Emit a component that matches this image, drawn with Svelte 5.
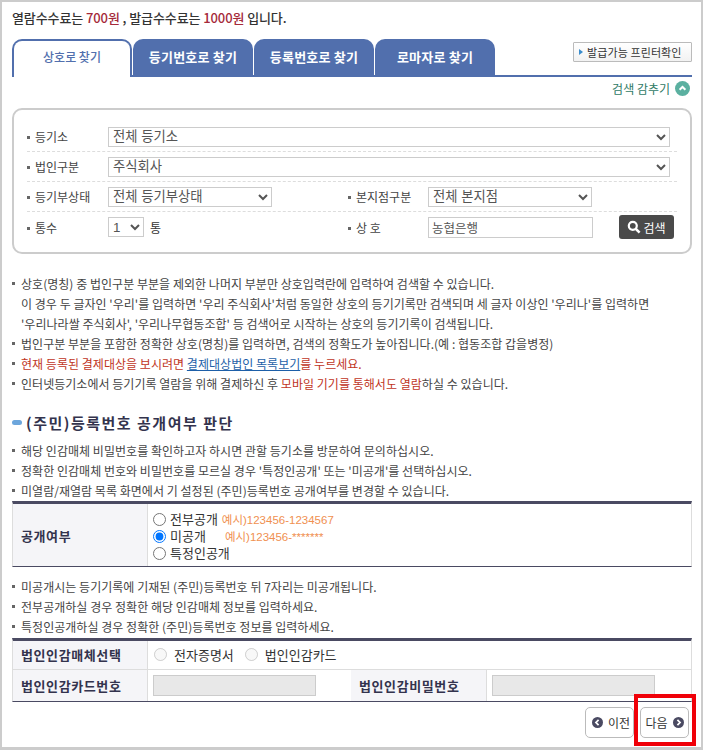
<script lang="ts">
	let visibility = $state('none');
	const fullNotes = ['미공개시는 등기기록에 기재된 (주민)등록번호 뒤 7자리는 미공개됩니다.', '전부공개하실 경우 정확한 해당 인감매체 정보를 입력하세요.', '특정인공개하실 경우 정확한 (주민)등록번호 정보를 입력하세요.'];
	const idNotes = ['해당 인감매체 비밀번호를 확인하고자 하시면 관할 등기소를 방문하여 문의하십시오.', '정확한 인감매체 번호와 비밀번호를 모르실 경우 \'특정인공개\' 또는 \'미공개\'를 선택하십시오.', '미열람/재열람 목록 화면에서 기 설정된 (주민)등록번호 공개여부를 변경할 수 있습니다.'];
	const tabs = ['상호로 찾기', '등기번호로 찾기', '등록번호로 찾기', '로마자로 찾기'];
</script>

<div class="page">
	<p class="fee">열람수수료는 <b>700원</b> , 발급수수료는 <b>1000원</b> 입니다.</p>

	<div class="tabbar">
		{#each tabs as tab, i}
			<button type="button" class={'tab ' + (i === 0 ? 'active' : '')}>{tab}</button>
		{/each}
		<button type="button" class="printer"><i></i>발급가능 프린터확인</button>
	</div>

	<div class="hide-row">
		검색 감추기
		<svg width="15" height="15" viewBox="0 0 15 15"><circle cx="7.5" cy="7.5" r="7.5" fill="#5bb0a0" /><path d="M4.6 8.8 7.5 6l2.9 2.8" fill="none" stroke="#fff" stroke-width="2" /></svg>
	</div>

	<div class="search">
		<div class="row">
			<span class="label">등기소</span>
			<select class="wide"><option>전체 등기소</option></select>
		</div>
		<div class="row">
			<span class="label">법인구분</span>
			<select class="wide"><option>주식회사</option></select>
		</div>
		<div class="row">
			<div class="half">
				<span class="label">등기부상태</span>
				<select class="mid"><option>전체 등기부상태</option></select>
			</div>
			<div class="half">
				<span class="label">본지점구분</span>
				<select class="mid"><option>전체 본지점</option></select>
			</div>
		</div>
		<div class="row last">
			<div class="half">
				<span class="label">통수</span>
				<select class="small"><option>1</option></select>
				<span class="unit">통</span>
			</div>
			<div class="half">
				<span class="label">상 호</span>
				<input class="name" value="농협은행" />
				<button type="button" class="search-btn">
					<svg width="14" height="14" viewBox="0 0 14 14"><circle cx="5.8" cy="5.8" r="4" fill="none" stroke="#fff" stroke-width="2.2" /><path d="M8.8 8.8 12.6 12.6" stroke="#fff" stroke-width="2.6" /></svg>
					검색
				</button>
			</div>
		</div>
	</div>

	<ul class="notes first">
		<li>상호(명칭) 중 법인구분 부분을 제외한 나머지 부분만 상호입력란에 입력하여 검색할 수 있습니다.<br />이 경우 두 글자인 '우리'를 입력하면 '우리 주식회사'처럼 동일한 상호의 등기기록만 검색되며 세 글자 이상인 '우리나'를 입력하면<br />'우리나라쌀 주식회사', '우리나무협동조합' 등 검색어로 시작하는 상호의 등기기록이 검색됩니다.</li>
		<li>법인구분 부분을 포함한 정확한 상호(명칭)를 입력하면, 검색의 정확도가 높아집니다.(예 : 협동조합 갑을병정)</li>
		<li><span class="red">현재 등록된 결제대상을 보시려면 <a href="#list">결제대상법인 목록보기</a>를 누르세요.</span></li>
		<li>인터넷등기소에서 등기기록 열람을 위해 결제하신 후 <span class="red">모바일 기기를 통해서도 열람</span>하실 수 있습니다.</li>
	</ul>

	<h2><i></i>(주민)등록번호 공개여부 판단</h2>

	<ul class="notes">
		{#each idNotes as note}
			<li>{note}</li>
		{/each}
	</ul>

	<div class="table disclose">
		<div class="th">공개여부</div>
		<div class="td radios">
			<label><input type="radio" bind:group={visibility} value="all" />전부공개<span class="eg">예시)123456-1234567</span></label>
			<label><input type="radio" bind:group={visibility} value="none" />미공개<span class="eg second">예시)123456-*******</span></label>
			<label><input type="radio" bind:group={visibility} value="some" />특정인공개</label>
		</div>
	</div>

	<ul class="notes">
		{#each fullNotes as note}
			<li>{note}</li>
		{/each}
	</ul>

	<div class="table seal">
		<div class="th">법인인감매체선택</div>
		<div class="td span media">
			<label><input type="radio" disabled />전자증명서</label>
			<label><input type="radio" disabled />법인인감카드</label>
		</div>
		<div class="th">법인인감카드번호</div>
		<div class="td"><input class="gray" disabled /></div>
		<div class="th">법인인감비밀번호</div>
		<div class="td"><input class="gray" disabled /></div>
	</div>

	<div class="actions">
		<button type="button" class="nav prev">
			<svg width="11" height="11" viewBox="0 0 10 10"><circle cx="5" cy="5" r="5" fill="#4a4a62" /><path d="M6 2.6 3.6 5 6 7.4" fill="none" stroke="#fff" stroke-width="1.6" /></svg>
			이전
		</button>
		<div class="next-mark">
			<button type="button" class="nav">
				다음
				<svg width="11" height="11" viewBox="0 0 10 10"><circle cx="5" cy="5" r="5" fill="#4a4a62" /><path d="M4 2.6 6.4 5 4 7.4" fill="none" stroke="#fff" stroke-width="1.6" /></svg>
			</button>
		</div>
	</div>
</div>

<style>
	:global(body) {
		margin: 0;
	}

	.page {
		box-sizing: border-box;
		width: 703px;
		height: 750px;
		overflow: hidden;
		border: 2px solid #ccc;
		border-bottom-width: 3px;
		padding: 0 10px;
		font-family: 'Noto Sans CJK KR', 'Noto Sans', sans-serif;
		font-size: 12px;
		color: #333;
		background: #fff;
	}

	.fee {
		margin: 0;
		height: 37px;
		line-height: 31px;
		font-size: 13px;
		letter-spacing: -0.1px;
		font-weight: 500;
		color: #333;
	}

	.fee b {
		font-weight: 500;
		color: #a52a3a;
	}

	.tabbar {
		display: flex;
		align-items: flex-end;
		height: 38px;
		width: 680px;
		border-bottom: 2px solid #516fad;
		box-sizing: border-box;
		gap: 1px;
	}

	.tab {
		box-sizing: border-box;
		width: 120px;
		height: 36px;
		border: 0;
		border-radius: 10px 10px 0 0;
		background: #516fad;
		color: #fff;
		font: inherit;
		font-size: 13px;
		letter-spacing: 0.2px;
		font-weight: 700;
		padding: 0 0 2px;
	}

	.tab.active {
		height: 38px;
		margin-bottom: -2px;
		background: #fff;
		border: 2px solid #516fad;
		border-bottom: 0;
		color: #516fad;
		font-size: 12px;
		letter-spacing: 0;
		font-weight: 500;
		padding-bottom: 5px;
	}

	.printer {
		box-sizing: border-box;
		display: flex;
		align-items: center;
		gap: 4px;
		margin: 0 0 13px auto;
		width: 119px;
		height: 20px;
		padding: 0 0 0 5px;
		border: 1px solid #bbb;
		border-radius: 1px;
		background: linear-gradient(#fff, #f2f2f2);
		font: inherit;
		font-size: 11px;
		letter-spacing: 0.1px;
		color: #333;
		white-space: nowrap;
	}

	.printer i {
		width: 0;
		height: 0;
		border-left: 4px solid #3a8ccc;
		border-top: 3px solid transparent;
		border-bottom: 3px solid transparent;
	}

	.hide-row {
		display: flex;
		justify-content: flex-end;
		align-items: center;
		gap: 5px;
		width: 678px;
		height: 22px;
		margin-bottom: 9px;
		color: #2f7a66;
	}

	.search {
		box-sizing: border-box;
		width: 680px;
		height: 146px;
		border: 2px solid #ccc;
		border-radius: 10px;
		padding: 12px 13px 0 13px;
	}

	.row {
		display: flex;
		align-items: center;
		height: 30px;
		border-bottom: 1px dashed #ddd;
		box-sizing: border-box;
	}

	.row.last {
		border-bottom: 0;
	}

	.half {
		display: flex;
		align-items: center;
		width: 321px;
	}

	.half + .half {
		width: 329px;
	}

	.half + .half .label {
		width: 80px;
	}

	.label {
		box-sizing: border-box;
		display: block;
		position: relative;
		width: 81px;
		flex: none;
		padding-left: 8px;
		color: #444;
	}

	.label::before {
		content: '';
		position: absolute;
		left: 0;
		top: 8px;
		width: 3px;
		height: 3px;
		background: #666;
	}

	select,
	.name {
		box-sizing: border-box;
		height: 20px;
		border: 1px solid #ccc;
		border-radius: 0;
		background-color: #fff;
		font: inherit;
		font-family: 'Liberation Sans', 'Noto Sans CJK KR', sans-serif;
		font-size: 13.33px;
		color: #555;
		padding: 0;
		outline: none;
	}

	.wide {
		width: 562px;
	}

	.mid {
		width: 164px;
	}

	.small {
		width: 36px;
	}

	.unit {
		margin-left: 6px;
	}

	.name {
		width: 165px;
		height: 21px;
		padding: 0 0 0 3px;
		font-size: 12.5px;
	}

	.search-btn {
		display: flex;
		align-items: center;
		justify-content: center;
		gap: 2px;
		box-sizing: border-box;
		width: 55px;
		height: 24px;
		margin-left: 26px;
		border: 0;
		border-radius: 3px;
		background: #4a4a4a;
		color: #fff;
		font: inherit;
		padding: 0;
	}

	.notes {
		list-style: none;
		margin: 0;
		padding: 0;
		letter-spacing: 0.03px;
		color: #444;
	}

	.notes.first {
		margin-top: 20px;
	}

	.notes li {
		position: relative;
		padding-left: 9px;
		line-height: 19.9px;
	}

	.notes li::before {
		content: '';
		position: absolute;
		left: 0;
		top: 8px;
		width: 3px;
		height: 3px;
		background: #666;
	}

	.red {
		color: #c0341d;
	}

	.red a {
		color: #1d5fa8;
		text-decoration: underline;
	}

	h2 {
		display: flex;
		align-items: center;
		gap: 4px;
		margin: 17px 0 7px;
		height: 24px;
		font-size: 15px;
		letter-spacing: 1.5px;
		font-weight: 700;
		color: #33334d;
	}

	h2 i {
		width: 10px;
		height: 5px;
		border-radius: 3px;
		background: #6ca6dc;
	}

	.table {
		box-sizing: border-box;
		width: 680px;
		display: grid;
		border-top: 3px solid #4a4a62;
		border-bottom: 1px solid #4a4a62;
		border-left: 1px solid #ddd;
		border-right: 1px solid #ddd;
	}

	.disclose {
		grid-template-columns: 135px 1fr;
		height: 66px;
		margin-bottom: 10px;
	}

	.disclose .th {
		padding-top: 1px;
	}

	.disclose .td {
		padding-top: 3px;
	}

	.th {
		display: flex;
		align-items: center;
		padding-left: 8px;
		background: #f5f5f8;
		font-size: 13px;
		letter-spacing: 0.6px;
		font-weight: 700;
		color: #33334d;
		border-right: 1px solid #ddd;
	}

	.td {
		display: flex;
		align-items: center;
		padding-left: 5px;
	}

	.radios {
		flex-direction: column;
		align-items: flex-start;
		justify-content: center;
	}

	.radios label {
		display: flex;
		align-items: center;
		height: 17px;
		line-height: 16px;
		font-family: 'Liberation Sans', 'Noto Sans CJK KR', sans-serif;
		font-size: 13px;
		color: #333;
	}

	input[type='radio'] {
		width: 13px;
		height: 13px;
		margin: 0 4px 0 0;
	}

	.eg {
		margin-left: 4px;
		font-size: 11.5px;
		color: #f09050;
	}

	.eg.second {
		margin-left: 19px;
	}

	.seal {
		grid-template-columns: 135px 203px 136px 1fr;
		grid-template-rows: 29px 31px;
		height: 64px;
		margin-top: 1px;
	}

	.seal .th,
	.seal .td {
		border-bottom: 1px solid #ddd;
	}

	.seal .th:nth-of-type(n + 3),
	.seal .td:nth-of-type(n + 4) {
		border-bottom: 0;
	}

	.span {
		grid-column: 2 / 5;
	}

	.media label {
		display: flex;
		align-items: center;
		margin-right: 10px;
		font-size: 13px;
		color: #333;
	}

	.media input {
		margin-right: 7px;
		margin-left: 1px;
	}

	.gray {
		box-sizing: border-box;
		width: 163px;
		height: 21px;
		border: 1px solid #ccc;
		background: #e8e8e8;
	}

	.actions {
		display: flex;
		justify-content: flex-end;
		gap: 6px;
		width: 677px;
		margin-top: 5px;
	}

	/* red annotation drawn on top of the screenshot */
	.next-mark {
		display: flex;
		position: relative;
	}

	.next-mark::after {
		content: '';
		position: absolute;
		left: -6px;
		right: -7px;
		top: -13px;
		bottom: -8px;
		border: 4px solid #f00008;
		pointer-events: none;
	}

	.nav {
		display: flex;
		align-items: center;
		justify-content: center;
		gap: 5px;
		box-sizing: border-box;
		width: 49px;
		height: 31px;
		padding: 0;
		border: 1px solid #bbb;
		border-radius: 5px;
		background: #fff;
		font: inherit;
		color: #333;
	}

	.nav.prev {
		padding-left: 3px;
	}
</style>
